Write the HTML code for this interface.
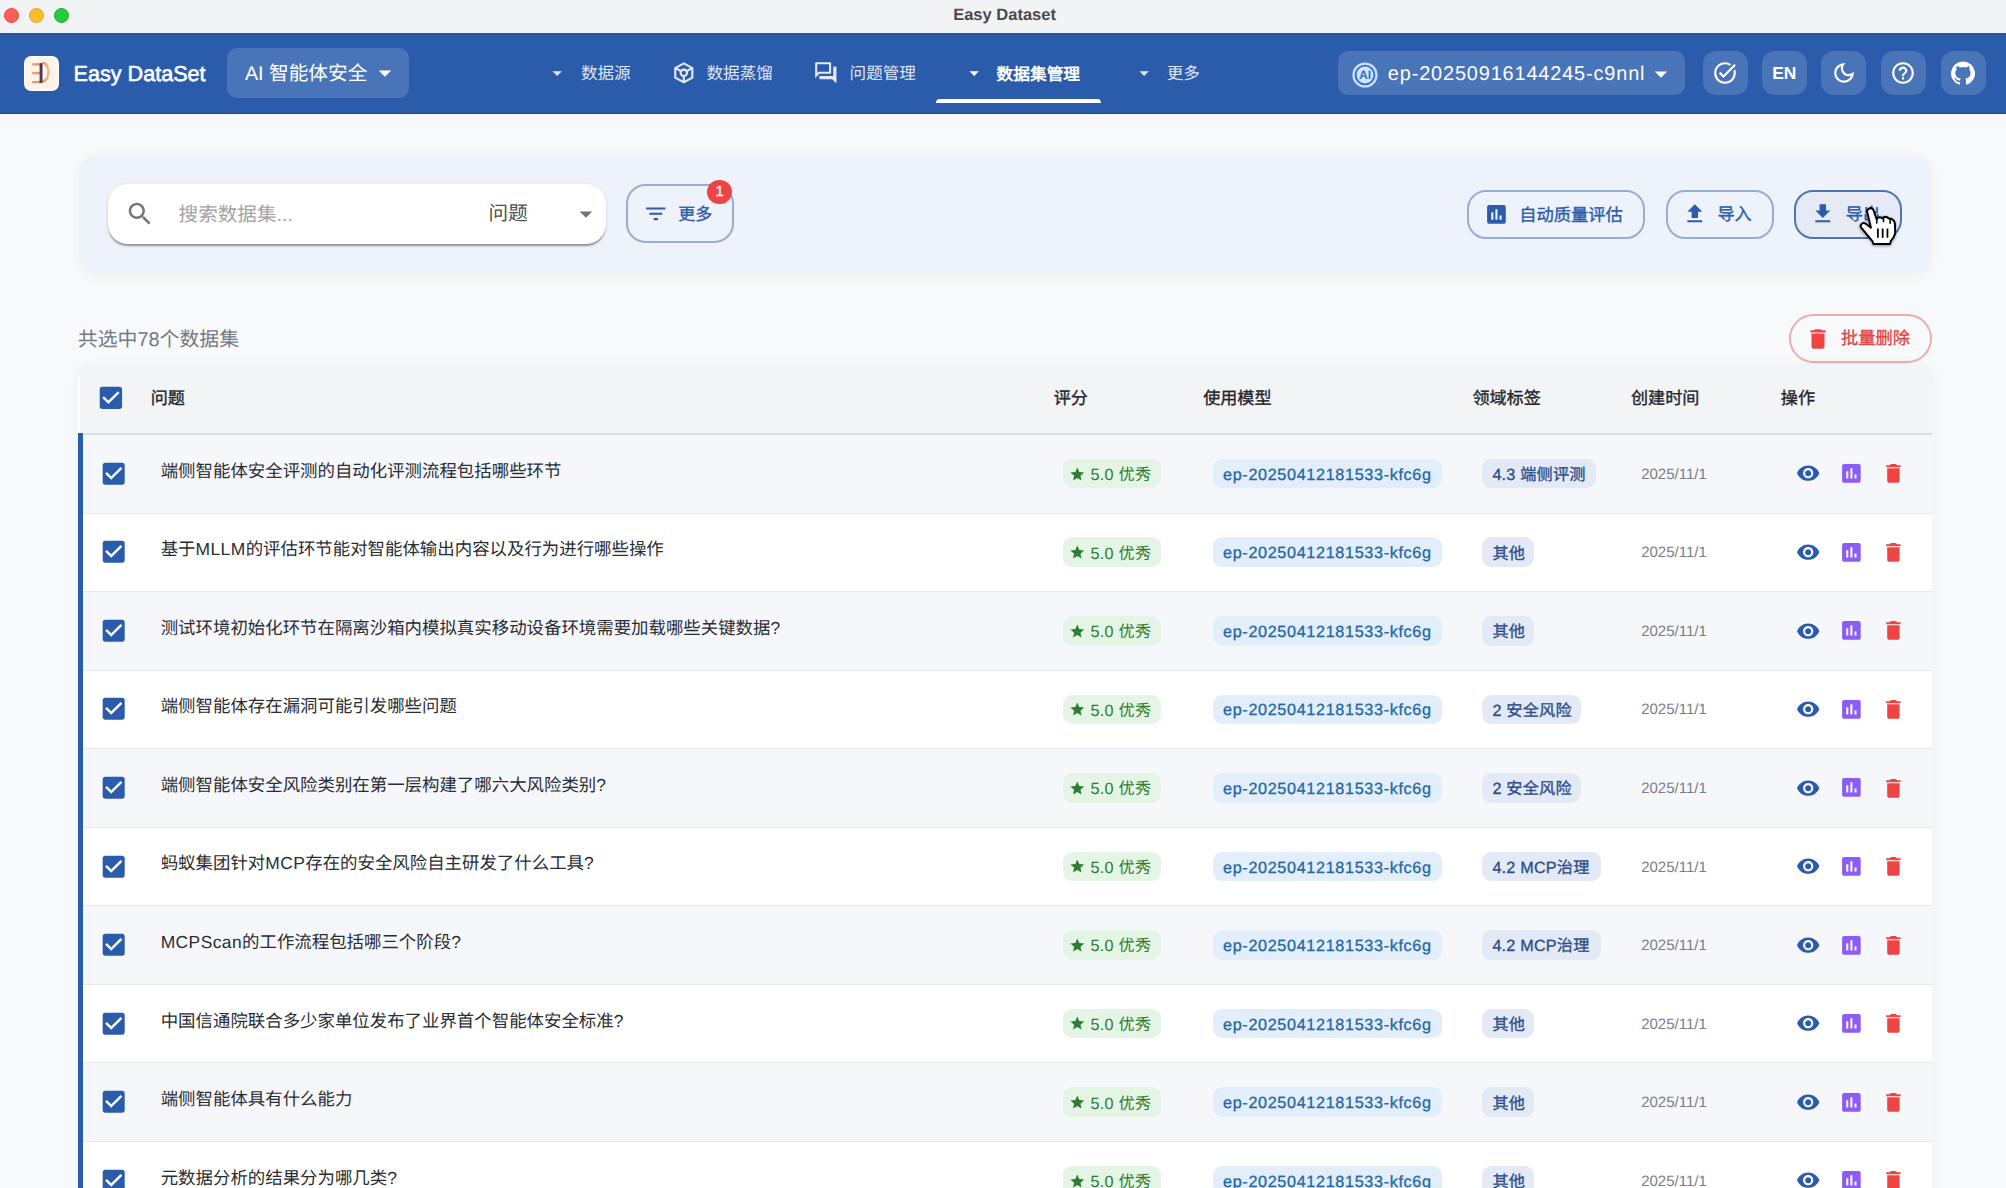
<!DOCTYPE html>
<html lang="zh-CN">
<head>
<meta charset="utf-8">
<title>Easy Dataset</title>
<style>
html,body{margin:0;padding:0;}
body{text-rendering:geometricPrecision;width:2006px;height:1188px;overflow:hidden;position:relative;background:#F8F9FB;font-family:"Liberation Sans",sans-serif;}
.abs{position:absolute;box-sizing:border-box;}
.t{position:absolute;white-space:nowrap;}
.ic{position:absolute;display:block;}
.pill{position:absolute;box-sizing:border-box;border-radius:19px;}
.chip{position:absolute;box-sizing:border-box;height:29.6px;border-radius:9px;}
</style>
</head>
<body>

<div class="abs" style="left:0;top:0;width:2006px;height:33px;background:#F2F3F5;"></div>
<div class="abs" style="left:4.1px;top:8.1px;width:15px;height:15px;border-radius:50%;background:#FE5F57;border:0.6px solid #E24B41;"></div>
<div class="abs" style="left:29.1px;top:8.1px;width:15px;height:15px;border-radius:50%;background:#FEBC2E;border:0.6px solid #E1A325;"></div>
<div class="abs" style="left:54.1px;top:8.1px;width:15px;height:15px;border-radius:50%;background:#28C840;border:0.6px solid #1FAE2F;"></div>
<div class="t" style="left:953.2px;top:3.0px;font-size:16.5px;line-height:24.8px;color:#4A4A4C;font-weight:700;">Easy Dataset</div>
<div class="abs" style="left:0;top:33px;width:2006px;height:80.5px;background:#2B5CAC;border-bottom:1px solid #214887;"></div>
<div class="abs" style="left:0;top:33px;width:2006px;height:1.5px;background:#28529B;"></div>
<svg class="ic" viewBox="0 0 35 35" style="left:24.1px;top:55.8px;width:35px;height:35px;">
<defs><linearGradient id="lg1" x1="0" y1="0" x2="1" y2="0"><stop offset="0" stop-color="#EBA685"/><stop offset="1" stop-color="#E08C66"/></linearGradient>
<linearGradient id="lg2" x1="0" y1="0" x2="1" y2="0"><stop offset="0" stop-color="#E5926D"/><stop offset="1" stop-color="#F3BB8B"/></linearGradient></defs>
<rect x="0" y="0" width="35" height="35" rx="7.2" fill="#FFFDFB"/>
<rect x="1.3" y="1.3" width="32.4" height="32.4" rx="6" fill="#FFF3EA"/>
<rect x="8" y="7.25" width="8" height="2.3" fill="url(#lg1)"/>
<rect x="8" y="16.05" width="8" height="2.3" fill="url(#lg1)"/>
<rect x="8" y="24.95" width="8" height="2.3" fill="url(#lg1)"/>
<path d="M18.4 6.7 A6.2 9.35 0 0 1 18.4 25.4" fill="none" stroke="url(#lg2)" stroke-width="2.6"/>
<rect x="15.6" y="7.1" width="2.9" height="20" fill="#4A3D4B"/>
</svg>
<div class="t" style="left:73.6px;top:57.9px;font-size:21.6px;line-height:32.4px;color:#FFFFFF;font-weight:400;letter-spacing:0px;-webkit-text-stroke:0.55px #FFFFFF;">Easy DataSet</div>
<div class="abs" style="left:226.7px;top:48px;width:182px;height:49.8px;border-radius:10px;background:rgba(255,255,255,0.15);"></div>
<div class="t" style="left:244.9px;top:60.45px;font-size:19.7px;line-height:29.5px;color:#FFFFFF;font-weight:400;">AI 智能体安全</div>
<svg class="ic" viewBox="0 0 24 24" style="left:370.3px;top:57.8px;width:29.9px;height:29.9px;fill:#FFFFFF;"><path d="m7 10 5 5 5-5z"/></svg>
<svg class="ic" viewBox="0 0 24 24" style="left:546.2px;top:62.2px;width:22.4px;height:22.4px;fill:rgba(255,255,255,0.86);"><path d="m7 10 5 5 5-5z"/></svg>
<div class="t" style="left:580.9px;top:62.05px;font-size:16.6px;line-height:24.9px;color:rgba(255,255,255,0.86);font-weight:500;">数据源</div>
<svg class="ic" viewBox="0 0 24 24" style="left:670.7px;top:60.4px;width:25.6px;height:25.6px;fill:rgba(255,255,255,0.86);"><path d="m21 7-9-5-8.99 5v10L12 22l9-5zm-9-2.71 5.91 3.28-3.01 1.67C14.17 8.48 13.14 8 12 8s-2.17.48-2.9 1.24L6.09 7.57zM11 19.16l-6-3.33V9.26l3.13 1.74c-.09.31-.13.65-.13 1 0 1.86 1.27 3.43 3 3.87zM10 12c0-1.1.9-2 2-2s2 .9 2 2-.9 2-2 2-2-.9-2-2m9 3.83-6 3.33v-3.29c1.73-.44 3-2.01 3-3.87 0-.35-.04-.69-.13-1L19 9.26z"/></svg>
<div class="t" style="left:706.5px;top:62.05px;font-size:16.6px;line-height:24.9px;color:rgba(255,255,255,0.86);font-weight:500;">数据蒸馏</div>
<svg class="ic" viewBox="0 0 24 24" style="left:813.2px;top:60.4px;width:25.6px;height:25.6px;fill:rgba(255,255,255,0.86);"><path d="M15 4v7H5.17l-.59.59-.58.58V4zm1-2H3c-.55 0-1 .45-1 1v14l4-4h10c.55 0 1-.45 1-1V3c0-.55-.45-1-1-1m5 4h-2v9H6v2c0 .55.45 1 1 1h11l4 4V7c0-.55-.45-1-1-1"/></svg>
<div class="t" style="left:849.6px;top:62.05px;font-size:16.6px;line-height:24.9px;color:rgba(255,255,255,0.86);font-weight:500;">问题管理</div>
<svg class="ic" viewBox="0 0 24 24" style="left:962.8px;top:62.2px;width:22.4px;height:22.4px;fill:#FFFFFF;"><path d="m7 10 5 5 5-5z"/></svg>
<div class="t" style="left:996.6px;top:61.8px;font-size:16.7px;line-height:25.0px;color:#FFFFFF;font-weight:700;">数据集管理</div>
<div class="abs" style="left:936.2px;top:99.2px;width:165px;height:3.8px;border-radius:3.8px 3.8px 0 0;background:#FFFFFF;"></div>
<svg class="ic" viewBox="0 0 24 24" style="left:1132.5px;top:62.2px;width:22.4px;height:22.4px;fill:rgba(255,255,255,0.86);"><path d="m7 10 5 5 5-5z"/></svg>
<div class="t" style="left:1166.7px;top:62.05px;font-size:16.6px;line-height:24.9px;color:rgba(255,255,255,0.86);font-weight:500;">更多</div>
<div class="abs" style="left:1338px;top:51px;width:347.3px;height:44.4px;border-radius:10px;background:rgba(255,255,255,0.15);"></div>
<svg class="ic" viewBox="0 0 26 26" style="left:1352.3px;top:61.7px;width:26px;height:26px;">
<circle cx="13" cy="13" r="12.6" fill="#CBE0FD"/>
<circle cx="13" cy="13" r="9.4" fill="#D6E4FA" stroke="#2C6FD1" stroke-width="1.9"/>
<text x="13" y="17.4" text-anchor="middle" font-family="Liberation Sans, sans-serif" font-weight="700" font-size="12.2" fill="#2C6FD1">AI</text>
</svg>
<div class="t" style="left:1387.8px;top:60.0px;font-size:19.9px;line-height:29.8px;color:#FFFFFF;font-weight:400;letter-spacing:0.86px;">ep-20250916144245-c9nnl</div>
<svg class="ic" viewBox="0 0 24 24" style="left:1646px;top:58.6px;width:29.9px;height:29.9px;fill:#FFFFFF;"><path d="m7 10 5 5 5-5z"/></svg>
<div class="abs" style="left:1703px;top:50.7px;width:44.8px;height:44.8px;border-radius:13px;background:rgba(255,255,255,0.15);"></div>
<div class="abs" style="left:1762.3px;top:50.7px;width:44.8px;height:44.8px;border-radius:13px;background:rgba(255,255,255,0.15);"></div>
<div class="abs" style="left:1821.2px;top:50.7px;width:44.8px;height:44.8px;border-radius:13px;background:rgba(255,255,255,0.15);"></div>
<div class="abs" style="left:1881px;top:50.7px;width:44.8px;height:44.8px;border-radius:13px;background:rgba(255,255,255,0.15);"></div>
<div class="abs" style="left:1941px;top:50.7px;width:44.8px;height:44.8px;border-radius:13px;background:rgba(255,255,255,0.15);"></div>
<svg class="ic" viewBox="0 0 24 24" style="left:1712.4px;top:60.099999999999994px;width:26px;height:26px;fill:#FFFFFF;"><path d="M22 5.18 10.59 16.6l-4.24-4.24 1.41-1.41 2.83 2.83 10-10zm-2.21 5.04c.13.57.21 1.17.21 1.78 0 4.42-3.58 8-8 8s-8-3.58-8-8 3.58-8 8-8c1.58 0 3.04.46 4.28 1.25l1.44-1.44C16.1 2.67 14.13 2 12 2 6.48 2 2 6.48 2 12s4.48 10 10 10 10-4.48 10-10c0-1.19-.22-2.33-.6-3.39z"/></svg>
<div class="t" style="left:1772.2px;top:60.25px;font-size:17.4px;line-height:26.1px;color:#FFFFFF;font-weight:700;">EN</div>
<svg class="ic" viewBox="0 0 24 24" style="left:1830.6000000000001px;top:60.099999999999994px;width:26px;height:26px;fill:#FFFFFF;"><path d="M9.37 5.51c-.18.64-.27 1.31-.27 1.99 0 4.08 3.32 7.4 7.4 7.4.68 0 1.35-.09 1.99-.27C17.45 17.19 14.93 19 12 19c-3.86 0-7-3.14-7-7 0-2.93 1.81-5.45 4.37-6.49M12 3c-4.97 0-9 4.03-9 9s4.03 9 9 9 9-4.03 9-9c0-.46-.04-.92-.1-1.36-.98 1.37-2.58 2.26-4.4 2.26-2.98 0-5.4-2.42-5.4-5.4 0-1.81.89-3.42 2.26-4.4-.44-.06-.9-.1-1.36-.1"/></svg>
<svg class="ic" viewBox="0 0 24 24" style="left:1890.4px;top:60.099999999999994px;width:26px;height:26px;fill:#FFFFFF;"><path d="M11 18h2v-2h-2zm1-16C6.48 2 2 6.48 2 12s4.48 10 10 10 10-4.48 10-10S17.52 2 12 2m0 18c-4.41 0-8-3.59-8-8s3.59-8 8-8 8 3.59 8 8-3.59 8-8 8m0-14c-2.21 0-4 1.79-4 4h2c0-1.1.9-2 2-2s2 .9 2 2c0 2-3 1.75-3 5h2c0-2.25 3-2.5 3-5 0-2.21-1.79-4-4-4"/></svg>
<svg class="ic" viewBox="0 0 24 24" style="left:1950.4px;top:60.099999999999994px;width:26px;height:26px;fill:#FFFFFF;"><path d="M12 1.27a11 11 0 00-3.48 21.46c.55.09.73-.28.73-.55v-1.84c-3.03.64-3.67-1.46-3.67-1.46-.55-1.29-1.28-1.65-1.28-1.65-.92-.65.1-.65.1-.65 1.1 0 1.73 1.1 1.73 1.1.92 1.65 2.57 1.2 3.21.92a2 2 0 01.64-1.47c-2.47-.27-5.04-1.19-5.04-5.5 0-1.1.46-2.1 1.2-2.84a3.76 3.76 0 010-2.93s.91-.28 3.11 1.1c1.8-.49 3.7-.49 5.5 0 2.1-1.38 3.02-1.1 3.02-1.1a3.76 3.76 0 010 2.93c.83.74 1.2 1.74 1.2 2.94 0 4.21-2.57 5.13-5.04 5.4.45.37.82.92.82 2.02v3.03c0 .27.1.64.73.55A11 11 0 0012 1.27"/></svg>
<div class="abs" style="left:79px;top:154px;width:1853px;height:119.6px;border-radius:20px;background:#EEF2FA;box-shadow:0 3px 14px rgba(0,0,0,0.035);"></div>
<div class="abs" style="left:108px;top:184px;width:498px;height:60px;border-radius:20px;background:#FFFFFF;box-shadow:0 2.5px 1.2px -1.2px rgba(0,0,0,0.2),0 1.2px 1.2px 0 rgba(0,0,0,0.14),0 1.2px 3.7px 0 rgba(0,0,0,0.12);"></div>
<svg class="ic" viewBox="0 0 24 24" style="left:125.1px;top:199.1px;width:29.9px;height:29.9px;fill:#757575;"><path d="M15.5 14h-.79l-.28-.27C15.41 12.59 16 11.11 16 9.5 16 5.91 13.09 3 9.5 3S3 5.91 3 9.5 5.91 16 9.5 16c1.61 0 3.09-.59 4.23-1.57l.27.28v.79l5 4.99L20.49 19zm-6 0C7.01 14 5 11.99 5 9.5S7.01 5 9.5 5 14 7.01 14 9.5 11.99 14 9.5 14"/></svg>
<div class="t" style="left:178.6px;top:201.4px;font-size:19.6px;line-height:29.4px;color:#A3A3A3;font-weight:400;">搜索数据集...</div>
<div class="t" style="left:488.6px;top:200.1px;font-size:19.6px;line-height:29.4px;color:#4F4F4F;font-weight:400;">问题</div>
<svg class="ic" viewBox="0 0 24 24" style="left:571.4px;top:199.4px;width:29.9px;height:29.9px;fill:#757575;"><path d="m7 10 5 5 5-5z"/></svg>
<div class="abs" style="left:626px;top:184.2px;width:108.4px;height:59.2px;border-radius:19.5px;border:2px solid #98ADD2;"></div>
<svg class="ic" viewBox="0 0 24 24" style="left:642.6px;top:201.1px;width:25.6px;height:25.6px;fill:#2B5CAC;"><path d="M10 18h4v-2h-4zM3 6v2h18V6zm3 7h12v-2H6z"/></svg>
<div class="t" style="left:678.3px;top:202.25px;font-size:17px;line-height:25.5px;color:#2B5CAC;font-weight:500;-webkit-text-stroke:0.35px #2B5CAC;">更多</div>
<div class="abs" style="left:707.4px;top:179.6px;width:24.6px;height:24.6px;border-radius:50%;background:#EF4444;"></div>
<div class="t" style="left:715.6px;top:180.9px;font-size:14.8px;line-height:22.2px;color:#FFFFFF;font-weight:400;-webkit-text-stroke:0.3px #FFFFFF;">1</div>
<div class="pill" style="left:1467.3px;top:189.6px;width:178.2px;height:49px;border:2px solid #98ADD2;"></div>
<svg class="ic" viewBox="0 0 24 24" style="left:1484.1px;top:201.6px;width:24.9px;height:24.9px;fill:#2B5CAC;"><path d="M19 3H5c-1.1 0-2 .9-2 2v14c0 1.1.9 2 2 2h14c1.1 0 2-.9 2-2V5c0-1.1-.9-2-2-2M9 17H7v-7h2zm4 0h-2V7h2zm4 0h-2v-4h2z"/></svg>
<div class="t" style="left:1519.2px;top:201.9px;font-size:17.3px;line-height:26.0px;color:#2B5CAC;font-weight:500;-webkit-text-stroke:0.35px #2B5CAC;">自动质量评估</div>
<div class="pill" style="left:1665.8px;top:189.6px;width:108px;height:49px;border:2px solid #98ADD2;"></div>
<svg class="ic" viewBox="0 0 24 24" style="left:1682.1px;top:200.6px;width:25.6px;height:25.6px;fill:#2B5CAC;"><path d="M5 20h14v-2H5zm0-10h4v6h6v-6h4l-7-7z"/></svg>
<div class="t" style="left:1717.4px;top:202.05px;font-size:17.1px;line-height:25.7px;color:#2B5CAC;font-weight:500;-webkit-text-stroke:0.35px #2B5CAC;">导入</div>
<div class="pill" style="left:1794px;top:189.6px;width:108px;height:49px;border:2px solid #4F74B2;background:#E6EAF5;"></div>
<svg class="ic" viewBox="0 0 24 24" style="left:1810.4px;top:200.9px;width:25.6px;height:25.6px;fill:#2B5CAC;"><path d="M5 20h14v-2H5zM19 9h-4V3H9v6H5l7 7z"/></svg>
<div class="t" style="left:1845.8px;top:202.05px;font-size:17.1px;line-height:25.7px;color:#2B5CAC;font-weight:500;-webkit-text-stroke:0.35px #2B5CAC;">导出</div>
<div class="t" style="left:77.8px;top:325.6px;font-size:19.9px;line-height:29.8px;color:#737A86;font-weight:400;">共选中78个数据集</div>
<div class="pill" style="left:1789px;top:313.6px;width:143.2px;height:49.3px;border:2px solid #F0ABAB;border-radius:24.6px;"></div>
<svg class="ic" viewBox="0 0 24 24" style="left:1805.2px;top:325.6px;width:26px;height:26px;fill:#EF4444;"><path d="M6 19c0 1.1.9 2 2 2h8c1.1 0 2-.9 2-2V7H6zM19 4h-3.500l-1-1h-5l-1 1H5v2h14z"/></svg>
<div class="t" style="left:1841px;top:325.2px;font-size:17.3px;line-height:26.0px;color:#E04848;font-weight:500;-webkit-text-stroke:0.35px #E04848;">批量删除</div>
<div class="abs" style="left:78px;top:363px;width:1854px;height:860px;border-radius:11px 11px 0 0;background:#FFFFFF;box-shadow:0 3px 14px rgba(0,0,0,0.04);overflow:hidden;">
<div class="abs" style="left:0;top:0;width:1854px;height:70px;background:#F3F4F6;"></div>
<div class="abs" style="left:0;top:8px;width:2.3px;height:62px;background:linear-gradient(#F3F4F6,#FFFFFF 12px);"></div>
<div class="abs" style="left:0;top:69.7px;width:1854px;height:2.3px;background:#DBDDE2;"></div>
<div class="abs" style="left:0;top:72.0px;width:1854px;height:78.55px;background:#F6F7FB;border-bottom:1.3px solid #E6E8EC;"></div>
<div class="abs" style="left:0;top:150.55px;width:1854px;height:78.55px;background:#FFFFFF;border-bottom:1.3px solid #E6E8EC;"></div>
<div class="abs" style="left:0;top:229.1px;width:1854px;height:78.55px;background:#F6F7FB;border-bottom:1.3px solid #E6E8EC;"></div>
<div class="abs" style="left:0;top:307.65px;width:1854px;height:78.55px;background:#FFFFFF;border-bottom:1.3px solid #E6E8EC;"></div>
<div class="abs" style="left:0;top:386.2px;width:1854px;height:78.55px;background:#F6F7FB;border-bottom:1.3px solid #E6E8EC;"></div>
<div class="abs" style="left:0;top:464.75px;width:1854px;height:78.55px;background:#FFFFFF;border-bottom:1.3px solid #E6E8EC;"></div>
<div class="abs" style="left:0;top:543.3px;width:1854px;height:78.55px;background:#F6F7FB;border-bottom:1.3px solid #E6E8EC;"></div>
<div class="abs" style="left:0;top:621.85px;width:1854px;height:78.55px;background:#FFFFFF;border-bottom:1.3px solid #E6E8EC;"></div>
<div class="abs" style="left:0;top:700.4px;width:1854px;height:78.55px;background:#F6F7FB;border-bottom:1.3px solid #E6E8EC;"></div>
<div class="abs" style="left:0;top:778.9499999999999px;width:1854px;height:78.55px;background:#FFFFFF;border-bottom:1.3px solid #E6E8EC;"></div>
</div>
<div class="abs" style="left:78px;top:432.8px;width:5px;height:800px;background:#2B5CAC;"></div>
<svg class="ic" viewBox="0 0 24 24" style="left:96.39999999999999px;top:382.8px;width:29.8px;height:29.8px;fill:#2B5CAC;"><path d="M19 3H5c-1.110 0-2 .9-2 2v14c0 1.100.890 2 2 2h14c1.110 0 2-.9 2-2V5c0-1.100-.890-2-2-2m-9 14-5-5 1.410-1.410L10 14.170l7.590-7.590L19 8z"/></svg>
<div class="t" style="left:150.7px;top:386.15px;font-size:17.1px;line-height:25.7px;color:#23262B;font-weight:500;-webkit-text-stroke:0.35px #23262B;">问题</div>
<div class="t" style="left:1053.7px;top:386.15px;font-size:17.1px;line-height:25.7px;color:#23262B;font-weight:500;-webkit-text-stroke:0.35px #23262B;">评分</div>
<div class="t" style="left:1203.2px;top:386.15px;font-size:17.1px;line-height:25.7px;color:#23262B;font-weight:500;-webkit-text-stroke:0.35px #23262B;">使用模型</div>
<div class="t" style="left:1472.4px;top:386.15px;font-size:17.1px;line-height:25.7px;color:#23262B;font-weight:500;-webkit-text-stroke:0.35px #23262B;">领域标签</div>
<div class="t" style="left:1631px;top:386.15px;font-size:17.1px;line-height:25.7px;color:#23262B;font-weight:500;-webkit-text-stroke:0.35px #23262B;">创建时间</div>
<div class="t" style="left:1780.8px;top:386.15px;font-size:17.1px;line-height:25.7px;color:#23262B;font-weight:500;-webkit-text-stroke:0.35px #23262B;">操作</div>
<svg class="ic" viewBox="0 0 24 24" style="left:99.3px;top:458.75px;width:29.4px;height:29.4px;fill:#2B5CAC;"><path d="M19 3H5c-1.110 0-2 .9-2 2v14c0 1.100.890 2 2 2h14c1.110 0 2-.9 2-2V5c0-1.100-.890-2-2-2m-9 14-5-5 1.410-1.410L10 14.170l7.590-7.590L19 8z"/></svg>
<div class="t" style="left:160.7px;top:457.7px;font-size:17.43px;line-height:26.1px;color:#2A2D33;font-weight:500;">端侧智能体安全评测的自动化评测流程包括哪些环节</div>
<div class="chip" style="left:1063.2px;top:458.84999999999997px;width:98px;background:#E4F4E5;"></div>
<svg class="ic" viewBox="0 0 24 24" style="left:1068.6px;top:465.55px;width:16.6px;height:16.6px;fill:#2E7D32;"><path d="M12 17.270 18.180 21l-1.640-7.030L22 9.240l-7.190-.61L12 2 9.190 8.630 2 9.240l5.460 4.730L5.820 21z"/></svg>
<div class="t" style="left:1090.6px;top:463.1px;font-size:16.2px;line-height:24.3px;color:#2E7D32;font-weight:500;letter-spacing:0.25px;">5.0 优秀</div>
<div class="chip" style="left:1212.8px;top:458.84999999999997px;width:228.8px;background:#E2EEF9;"></div>
<div class="t" style="left:1223px;top:462.8px;font-size:16.2px;line-height:24.3px;color:#2468A4;font-weight:400;letter-spacing:0.66px;-webkit-text-stroke:0.3px #2468A4;">ep-20250412181533-kfc6g</div>
<div class="chip" style="left:1481.9px;top:458.84999999999997px;width:113.9px;background:#E4EAF5;"></div>
<div class="t" style="left:1492.4px;top:463.1px;font-size:16.2px;line-height:24.3px;color:#2F4F8C;font-weight:500;letter-spacing:0.2px;-webkit-text-stroke:0.35px #2F4F8C;">4.3 端侧评测</div>
<div class="t" style="left:1641.2px;top:463.8px;font-size:15px;line-height:22.5px;color:#7A7D84;font-weight:400;">2025/11/1</div>
<svg class="ic" viewBox="0 0 24 24" style="left:1796.2px;top:461.45px;width:24.4px;height:24.4px;fill:#2B5CAC;"><path d="M12 4.5C7 4.500 2.730 7.610 1 12c1.730 4.390 6 7.500 11 7.500s9.270-3.110 11-7.500c-1.730-4.390-6-7.500-11-7.500M12 17c-2.760 0-5-2.240-5-5s2.240-5 5-5 5 2.240 5 5-2.240 5-5 5m0-8c-1.660 0-3 1.340-3 3s1.340 3 3 3 3-1.340 3-3-1.340-3-3-3"/></svg>
<svg class="ic" viewBox="0 0 24 24" style="left:1838.6px;top:461.25px;width:24.8px;height:24.8px;fill:#8B5CF6;"><path d="M19 3H5c-1.1 0-2 .9-2 2v14c0 1.1.9 2 2 2h14c1.1 0 2-.9 2-2V5c0-1.1-.9-2-2-2M9 17H7v-7h2zm4 0h-2V7h2zm4 0h-2v-4h2z"/></svg>
<svg class="ic" viewBox="0 0 24 24" style="left:1880.8999999999999px;top:461.35px;width:24.8px;height:24.8px;fill:#EF4444;"><path d="M6 19c0 1.1.9 2 2 2h8c1.1 0 2-.9 2-2V7H6zM19 4h-3.500l-1-1h-5l-1 1H5v2h14z"/></svg>
<svg class="ic" viewBox="0 0 24 24" style="left:99.3px;top:537.3px;width:29.4px;height:29.4px;fill:#2B5CAC;"><path d="M19 3H5c-1.110 0-2 .9-2 2v14c0 1.100.890 2 2 2h14c1.110 0 2-.9 2-2V5c0-1.100-.890-2-2-2m-9 14-5-5 1.410-1.410L10 14.170l7.590-7.590L19 8z"/></svg>
<div class="t" style="left:160.7px;top:536.25px;font-size:17.43px;line-height:26.1px;color:#2A2D33;font-weight:500;">基于<span style="letter-spacing:0.42px">MLLM</span>的评估环节能对智能体输出内容以及行为进行哪些操作</div>
<div class="chip" style="left:1063.2px;top:537.4px;width:98px;background:#E4F4E5;"></div>
<svg class="ic" viewBox="0 0 24 24" style="left:1068.6px;top:544.1px;width:16.6px;height:16.6px;fill:#2E7D32;"><path d="M12 17.270 18.180 21l-1.640-7.030L22 9.240l-7.190-.61L12 2 9.190 8.630 2 9.240l5.460 4.730L5.820 21z"/></svg>
<div class="t" style="left:1090.6px;top:541.65px;font-size:16.2px;line-height:24.3px;color:#2E7D32;font-weight:500;letter-spacing:0.25px;">5.0 优秀</div>
<div class="chip" style="left:1212.8px;top:537.4px;width:228.8px;background:#E2EEF9;"></div>
<div class="t" style="left:1223px;top:541.35px;font-size:16.2px;line-height:24.3px;color:#2468A4;font-weight:400;letter-spacing:0.66px;-webkit-text-stroke:0.3px #2468A4;">ep-20250412181533-kfc6g</div>
<div class="chip" style="left:1481.9px;top:537.4px;width:51.8px;background:#E4EAF5;"></div>
<div class="t" style="left:1492.4px;top:541.65px;font-size:16.2px;line-height:24.3px;color:#2F4F8C;font-weight:500;letter-spacing:0.2px;-webkit-text-stroke:0.35px #2F4F8C;">其他</div>
<div class="t" style="left:1641.2px;top:542.35px;font-size:15px;line-height:22.5px;color:#7A7D84;font-weight:400;">2025/11/1</div>
<svg class="ic" viewBox="0 0 24 24" style="left:1796.2px;top:540.0px;width:24.4px;height:24.4px;fill:#2B5CAC;"><path d="M12 4.5C7 4.500 2.730 7.610 1 12c1.730 4.390 6 7.500 11 7.500s9.270-3.110 11-7.500c-1.730-4.390-6-7.500-11-7.500M12 17c-2.760 0-5-2.240-5-5s2.240-5 5-5 5 2.240 5 5-2.240 5-5 5m0-8c-1.660 0-3 1.340-3 3s1.340 3 3 3 3-1.340 3-3-1.340-3-3-3"/></svg>
<svg class="ic" viewBox="0 0 24 24" style="left:1838.6px;top:539.8000000000001px;width:24.8px;height:24.8px;fill:#8B5CF6;"><path d="M19 3H5c-1.1 0-2 .9-2 2v14c0 1.1.9 2 2 2h14c1.1 0 2-.9 2-2V5c0-1.1-.9-2-2-2M9 17H7v-7h2zm4 0h-2V7h2zm4 0h-2v-4h2z"/></svg>
<svg class="ic" viewBox="0 0 24 24" style="left:1880.8999999999999px;top:539.9px;width:24.8px;height:24.8px;fill:#EF4444;"><path d="M6 19c0 1.1.9 2 2 2h8c1.1 0 2-.9 2-2V7H6zM19 4h-3.500l-1-1h-5l-1 1H5v2h14z"/></svg>
<svg class="ic" viewBox="0 0 24 24" style="left:99.3px;top:615.8499999999999px;width:29.4px;height:29.4px;fill:#2B5CAC;"><path d="M19 3H5c-1.110 0-2 .9-2 2v14c0 1.100.890 2 2 2h14c1.110 0 2-.9 2-2V5c0-1.100-.890-2-2-2m-9 14-5-5 1.410-1.410L10 14.170l7.590-7.590L19 8z"/></svg>
<div class="t" style="left:160.7px;top:614.8px;font-size:17.43px;line-height:26.1px;color:#2A2D33;font-weight:500;">测试环境初始化环节在隔离沙箱内模拟真实移动设备环境需要加载哪些关键数据?</div>
<div class="chip" style="left:1063.2px;top:615.9499999999999px;width:98px;background:#E4F4E5;"></div>
<svg class="ic" viewBox="0 0 24 24" style="left:1068.6px;top:622.65px;width:16.6px;height:16.6px;fill:#2E7D32;"><path d="M12 17.270 18.180 21l-1.640-7.030L22 9.240l-7.190-.61L12 2 9.190 8.630 2 9.240l5.460 4.730L5.820 21z"/></svg>
<div class="t" style="left:1090.6px;top:620.2px;font-size:16.2px;line-height:24.3px;color:#2E7D32;font-weight:500;letter-spacing:0.25px;">5.0 优秀</div>
<div class="chip" style="left:1212.8px;top:615.9499999999999px;width:228.8px;background:#E2EEF9;"></div>
<div class="t" style="left:1223px;top:619.9px;font-size:16.2px;line-height:24.3px;color:#2468A4;font-weight:400;letter-spacing:0.66px;-webkit-text-stroke:0.3px #2468A4;">ep-20250412181533-kfc6g</div>
<div class="chip" style="left:1481.9px;top:615.9499999999999px;width:51.8px;background:#E4EAF5;"></div>
<div class="t" style="left:1492.4px;top:620.2px;font-size:16.2px;line-height:24.3px;color:#2F4F8C;font-weight:500;letter-spacing:0.2px;-webkit-text-stroke:0.35px #2F4F8C;">其他</div>
<div class="t" style="left:1641.2px;top:620.9px;font-size:15px;line-height:22.5px;color:#7A7D84;font-weight:400;">2025/11/1</div>
<svg class="ic" viewBox="0 0 24 24" style="left:1796.2px;top:618.55px;width:24.4px;height:24.4px;fill:#2B5CAC;"><path d="M12 4.5C7 4.500 2.730 7.610 1 12c1.730 4.390 6 7.500 11 7.500s9.270-3.110 11-7.500c-1.730-4.390-6-7.500-11-7.500M12 17c-2.760 0-5-2.240-5-5s2.240-5 5-5 5 2.240 5 5-2.240 5-5 5m0-8c-1.660 0-3 1.340-3 3s1.340 3 3 3 3-1.340 3-3-1.340-3-3-3"/></svg>
<svg class="ic" viewBox="0 0 24 24" style="left:1838.6px;top:618.35px;width:24.8px;height:24.8px;fill:#8B5CF6;"><path d="M19 3H5c-1.1 0-2 .9-2 2v14c0 1.1.9 2 2 2h14c1.1 0 2-.9 2-2V5c0-1.1-.9-2-2-2M9 17H7v-7h2zm4 0h-2V7h2zm4 0h-2v-4h2z"/></svg>
<svg class="ic" viewBox="0 0 24 24" style="left:1880.8999999999999px;top:618.4499999999999px;width:24.8px;height:24.8px;fill:#EF4444;"><path d="M6 19c0 1.1.9 2 2 2h8c1.1 0 2-.9 2-2V7H6zM19 4h-3.500l-1-1h-5l-1 1H5v2h14z"/></svg>
<svg class="ic" viewBox="0 0 24 24" style="left:99.3px;top:694.3999999999999px;width:29.4px;height:29.4px;fill:#2B5CAC;"><path d="M19 3H5c-1.110 0-2 .9-2 2v14c0 1.100.890 2 2 2h14c1.110 0 2-.9 2-2V5c0-1.100-.890-2-2-2m-9 14-5-5 1.410-1.410L10 14.170l7.590-7.590L19 8z"/></svg>
<div class="t" style="left:160.7px;top:693.35px;font-size:17.43px;line-height:26.1px;color:#2A2D33;font-weight:500;">端侧智能体存在漏洞可能引发哪些问题</div>
<div class="chip" style="left:1063.2px;top:694.4999999999999px;width:98px;background:#E4F4E5;"></div>
<svg class="ic" viewBox="0 0 24 24" style="left:1068.6px;top:701.1999999999999px;width:16.6px;height:16.6px;fill:#2E7D32;"><path d="M12 17.270 18.180 21l-1.640-7.030L22 9.240l-7.190-.61L12 2 9.190 8.630 2 9.240l5.460 4.730L5.820 21z"/></svg>
<div class="t" style="left:1090.6px;top:698.75px;font-size:16.2px;line-height:24.3px;color:#2E7D32;font-weight:500;letter-spacing:0.25px;">5.0 优秀</div>
<div class="chip" style="left:1212.8px;top:694.4999999999999px;width:228.8px;background:#E2EEF9;"></div>
<div class="t" style="left:1223px;top:698.45px;font-size:16.2px;line-height:24.3px;color:#2468A4;font-weight:400;letter-spacing:0.66px;-webkit-text-stroke:0.3px #2468A4;">ep-20250412181533-kfc6g</div>
<div class="chip" style="left:1481.9px;top:694.4999999999999px;width:99px;background:#E4EAF5;"></div>
<div class="t" style="left:1492.4px;top:698.75px;font-size:16.2px;line-height:24.3px;color:#2F4F8C;font-weight:500;letter-spacing:0.2px;-webkit-text-stroke:0.35px #2F4F8C;">2 安全风险</div>
<div class="t" style="left:1641.2px;top:699.45px;font-size:15px;line-height:22.5px;color:#7A7D84;font-weight:400;">2025/11/1</div>
<svg class="ic" viewBox="0 0 24 24" style="left:1796.2px;top:697.0999999999999px;width:24.4px;height:24.4px;fill:#2B5CAC;"><path d="M12 4.5C7 4.500 2.730 7.610 1 12c1.730 4.390 6 7.500 11 7.500s9.270-3.110 11-7.500c-1.730-4.390-6-7.500-11-7.500M12 17c-2.760 0-5-2.240-5-5s2.240-5 5-5 5 2.240 5 5-2.240 5-5 5m0-8c-1.660 0-3 1.340-3 3s1.340 3 3 3 3-1.340 3-3-1.340-3-3-3"/></svg>
<svg class="ic" viewBox="0 0 24 24" style="left:1838.6px;top:696.9px;width:24.8px;height:24.8px;fill:#8B5CF6;"><path d="M19 3H5c-1.1 0-2 .9-2 2v14c0 1.1.9 2 2 2h14c1.1 0 2-.9 2-2V5c0-1.1-.9-2-2-2M9 17H7v-7h2zm4 0h-2V7h2zm4 0h-2v-4h2z"/></svg>
<svg class="ic" viewBox="0 0 24 24" style="left:1880.8999999999999px;top:696.9999999999999px;width:24.8px;height:24.8px;fill:#EF4444;"><path d="M6 19c0 1.1.9 2 2 2h8c1.1 0 2-.9 2-2V7H6zM19 4h-3.500l-1-1h-5l-1 1H5v2h14z"/></svg>
<svg class="ic" viewBox="0 0 24 24" style="left:99.3px;top:772.9499999999999px;width:29.4px;height:29.4px;fill:#2B5CAC;"><path d="M19 3H5c-1.110 0-2 .9-2 2v14c0 1.100.890 2 2 2h14c1.110 0 2-.9 2-2V5c0-1.100-.890-2-2-2m-9 14-5-5 1.410-1.410L10 14.170l7.590-7.590L19 8z"/></svg>
<div class="t" style="left:160.7px;top:771.9px;font-size:17.43px;line-height:26.1px;color:#2A2D33;font-weight:500;">端侧智能体安全风险类别在第一层构建了哪六大风险类别?</div>
<div class="chip" style="left:1063.2px;top:773.05px;width:98px;background:#E4F4E5;"></div>
<svg class="ic" viewBox="0 0 24 24" style="left:1068.6px;top:779.75px;width:16.6px;height:16.6px;fill:#2E7D32;"><path d="M12 17.270 18.180 21l-1.640-7.030L22 9.240l-7.190-.61L12 2 9.190 8.630 2 9.240l5.460 4.730L5.820 21z"/></svg>
<div class="t" style="left:1090.6px;top:777.3px;font-size:16.2px;line-height:24.3px;color:#2E7D32;font-weight:500;letter-spacing:0.25px;">5.0 优秀</div>
<div class="chip" style="left:1212.8px;top:773.05px;width:228.8px;background:#E2EEF9;"></div>
<div class="t" style="left:1223px;top:777.0px;font-size:16.2px;line-height:24.3px;color:#2468A4;font-weight:400;letter-spacing:0.66px;-webkit-text-stroke:0.3px #2468A4;">ep-20250412181533-kfc6g</div>
<div class="chip" style="left:1481.9px;top:773.05px;width:99px;background:#E4EAF5;"></div>
<div class="t" style="left:1492.4px;top:777.3px;font-size:16.2px;line-height:24.3px;color:#2F4F8C;font-weight:500;letter-spacing:0.2px;-webkit-text-stroke:0.35px #2F4F8C;">2 安全风险</div>
<div class="t" style="left:1641.2px;top:778.0px;font-size:15px;line-height:22.5px;color:#7A7D84;font-weight:400;">2025/11/1</div>
<svg class="ic" viewBox="0 0 24 24" style="left:1796.2px;top:775.65px;width:24.4px;height:24.4px;fill:#2B5CAC;"><path d="M12 4.5C7 4.500 2.730 7.610 1 12c1.730 4.390 6 7.500 11 7.500s9.270-3.110 11-7.500c-1.730-4.390-6-7.500-11-7.500M12 17c-2.760 0-5-2.240-5-5s2.240-5 5-5 5 2.240 5 5-2.240 5-5 5m0-8c-1.660 0-3 1.340-3 3s1.340 3 3 3 3-1.340 3-3-1.340-3-3-3"/></svg>
<svg class="ic" viewBox="0 0 24 24" style="left:1838.6px;top:775.45px;width:24.8px;height:24.8px;fill:#8B5CF6;"><path d="M19 3H5c-1.1 0-2 .9-2 2v14c0 1.1.9 2 2 2h14c1.1 0 2-.9 2-2V5c0-1.1-.9-2-2-2M9 17H7v-7h2zm4 0h-2V7h2zm4 0h-2v-4h2z"/></svg>
<svg class="ic" viewBox="0 0 24 24" style="left:1880.8999999999999px;top:775.55px;width:24.8px;height:24.8px;fill:#EF4444;"><path d="M6 19c0 1.1.9 2 2 2h8c1.1 0 2-.9 2-2V7H6zM19 4h-3.500l-1-1h-5l-1 1H5v2h14z"/></svg>
<svg class="ic" viewBox="0 0 24 24" style="left:99.3px;top:851.5px;width:29.4px;height:29.4px;fill:#2B5CAC;"><path d="M19 3H5c-1.110 0-2 .9-2 2v14c0 1.100.890 2 2 2h14c1.110 0 2-.9 2-2V5c0-1.100-.890-2-2-2m-9 14-5-5 1.410-1.410L10 14.170l7.590-7.590L19 8z"/></svg>
<div class="t" style="left:160.7px;top:850.45px;font-size:17.43px;line-height:26.1px;color:#2A2D33;font-weight:500;">蚂蚁集团针对<span style="letter-spacing:0.42px">MCP</span>存在的安全风险自主研发了什么工具?</div>
<div class="chip" style="left:1063.2px;top:851.6px;width:98px;background:#E4F4E5;"></div>
<svg class="ic" viewBox="0 0 24 24" style="left:1068.6px;top:858.3000000000001px;width:16.6px;height:16.6px;fill:#2E7D32;"><path d="M12 17.270 18.180 21l-1.640-7.030L22 9.240l-7.190-.61L12 2 9.190 8.630 2 9.240l5.460 4.730L5.820 21z"/></svg>
<div class="t" style="left:1090.6px;top:855.85px;font-size:16.2px;line-height:24.3px;color:#2E7D32;font-weight:500;letter-spacing:0.25px;">5.0 优秀</div>
<div class="chip" style="left:1212.8px;top:851.6px;width:228.8px;background:#E2EEF9;"></div>
<div class="t" style="left:1223px;top:855.55px;font-size:16.2px;line-height:24.3px;color:#2468A4;font-weight:400;letter-spacing:0.66px;-webkit-text-stroke:0.3px #2468A4;">ep-20250412181533-kfc6g</div>
<div class="chip" style="left:1481.9px;top:851.6px;width:119px;background:#E4EAF5;"></div>
<div class="t" style="left:1492.4px;top:855.85px;font-size:16.2px;line-height:24.3px;color:#2F4F8C;font-weight:500;letter-spacing:0.2px;-webkit-text-stroke:0.35px #2F4F8C;">4.2 MCP治理</div>
<div class="t" style="left:1641.2px;top:856.55px;font-size:15px;line-height:22.5px;color:#7A7D84;font-weight:400;">2025/11/1</div>
<svg class="ic" viewBox="0 0 24 24" style="left:1796.2px;top:854.2px;width:24.4px;height:24.4px;fill:#2B5CAC;"><path d="M12 4.5C7 4.500 2.730 7.610 1 12c1.730 4.390 6 7.500 11 7.500s9.270-3.110 11-7.500c-1.730-4.390-6-7.500-11-7.500M12 17c-2.760 0-5-2.240-5-5s2.240-5 5-5 5 2.240 5 5-2.240 5-5 5m0-8c-1.660 0-3 1.340-3 3s1.340 3 3 3 3-1.340 3-3-1.340-3-3-3"/></svg>
<svg class="ic" viewBox="0 0 24 24" style="left:1838.6px;top:854.0000000000001px;width:24.8px;height:24.8px;fill:#8B5CF6;"><path d="M19 3H5c-1.1 0-2 .9-2 2v14c0 1.1.9 2 2 2h14c1.1 0 2-.9 2-2V5c0-1.1-.9-2-2-2M9 17H7v-7h2zm4 0h-2V7h2zm4 0h-2v-4h2z"/></svg>
<svg class="ic" viewBox="0 0 24 24" style="left:1880.8999999999999px;top:854.1px;width:24.8px;height:24.8px;fill:#EF4444;"><path d="M6 19c0 1.1.9 2 2 2h8c1.1 0 2-.9 2-2V7H6zM19 4h-3.500l-1-1h-5l-1 1H5v2h14z"/></svg>
<svg class="ic" viewBox="0 0 24 24" style="left:99.3px;top:930.05px;width:29.4px;height:29.4px;fill:#2B5CAC;"><path d="M19 3H5c-1.110 0-2 .9-2 2v14c0 1.100.890 2 2 2h14c1.110 0 2-.9 2-2V5c0-1.100-.890-2-2-2m-9 14-5-5 1.410-1.410L10 14.170l7.590-7.590L19 8z"/></svg>
<div class="t" style="left:160.7px;top:929.0px;font-size:17.43px;line-height:26.1px;color:#2A2D33;font-weight:500;"><span style="letter-spacing:0.42px">MCPScan</span>的工作流程包括哪三个阶段?</div>
<div class="chip" style="left:1063.2px;top:930.15px;width:98px;background:#E4F4E5;"></div>
<svg class="ic" viewBox="0 0 24 24" style="left:1068.6px;top:936.85px;width:16.6px;height:16.6px;fill:#2E7D32;"><path d="M12 17.270 18.180 21l-1.640-7.030L22 9.240l-7.190-.61L12 2 9.190 8.630 2 9.240l5.460 4.730L5.820 21z"/></svg>
<div class="t" style="left:1090.6px;top:934.4px;font-size:16.2px;line-height:24.3px;color:#2E7D32;font-weight:500;letter-spacing:0.25px;">5.0 优秀</div>
<div class="chip" style="left:1212.8px;top:930.15px;width:228.8px;background:#E2EEF9;"></div>
<div class="t" style="left:1223px;top:934.1px;font-size:16.2px;line-height:24.3px;color:#2468A4;font-weight:400;letter-spacing:0.66px;-webkit-text-stroke:0.3px #2468A4;">ep-20250412181533-kfc6g</div>
<div class="chip" style="left:1481.9px;top:930.15px;width:119px;background:#E4EAF5;"></div>
<div class="t" style="left:1492.4px;top:934.4px;font-size:16.2px;line-height:24.3px;color:#2F4F8C;font-weight:500;letter-spacing:0.2px;-webkit-text-stroke:0.35px #2F4F8C;">4.2 MCP治理</div>
<div class="t" style="left:1641.2px;top:935.1px;font-size:15px;line-height:22.5px;color:#7A7D84;font-weight:400;">2025/11/1</div>
<svg class="ic" viewBox="0 0 24 24" style="left:1796.2px;top:932.75px;width:24.4px;height:24.4px;fill:#2B5CAC;"><path d="M12 4.5C7 4.500 2.730 7.610 1 12c1.730 4.390 6 7.500 11 7.500s9.270-3.110 11-7.500c-1.730-4.390-6-7.500-11-7.500M12 17c-2.760 0-5-2.240-5-5s2.240-5 5-5 5 2.240 5 5-2.240 5-5 5m0-8c-1.660 0-3 1.340-3 3s1.340 3 3 3 3-1.340 3-3-1.340-3-3-3"/></svg>
<svg class="ic" viewBox="0 0 24 24" style="left:1838.6px;top:932.5500000000001px;width:24.8px;height:24.8px;fill:#8B5CF6;"><path d="M19 3H5c-1.1 0-2 .9-2 2v14c0 1.1.9 2 2 2h14c1.1 0 2-.9 2-2V5c0-1.1-.9-2-2-2M9 17H7v-7h2zm4 0h-2V7h2zm4 0h-2v-4h2z"/></svg>
<svg class="ic" viewBox="0 0 24 24" style="left:1880.8999999999999px;top:932.65px;width:24.8px;height:24.8px;fill:#EF4444;"><path d="M6 19c0 1.1.9 2 2 2h8c1.1 0 2-.9 2-2V7H6zM19 4h-3.500l-1-1h-5l-1 1H5v2h14z"/></svg>
<svg class="ic" viewBox="0 0 24 24" style="left:99.3px;top:1008.5999999999999px;width:29.4px;height:29.4px;fill:#2B5CAC;"><path d="M19 3H5c-1.110 0-2 .9-2 2v14c0 1.100.890 2 2 2h14c1.110 0 2-.9 2-2V5c0-1.100-.890-2-2-2m-9 14-5-5 1.410-1.410L10 14.170l7.590-7.590L19 8z"/></svg>
<div class="t" style="left:160.7px;top:1007.55px;font-size:17.43px;line-height:26.1px;color:#2A2D33;font-weight:500;">中国信通院联合多少家单位发布了业界首个智能体安全标准?</div>
<div class="chip" style="left:1063.2px;top:1008.6999999999999px;width:98px;background:#E4F4E5;"></div>
<svg class="ic" viewBox="0 0 24 24" style="left:1068.6px;top:1015.4px;width:16.6px;height:16.6px;fill:#2E7D32;"><path d="M12 17.270 18.180 21l-1.640-7.030L22 9.240l-7.190-.61L12 2 9.190 8.630 2 9.240l5.460 4.730L5.820 21z"/></svg>
<div class="t" style="left:1090.6px;top:1012.95px;font-size:16.2px;line-height:24.3px;color:#2E7D32;font-weight:500;letter-spacing:0.25px;">5.0 优秀</div>
<div class="chip" style="left:1212.8px;top:1008.6999999999999px;width:228.8px;background:#E2EEF9;"></div>
<div class="t" style="left:1223px;top:1012.65px;font-size:16.2px;line-height:24.3px;color:#2468A4;font-weight:400;letter-spacing:0.66px;-webkit-text-stroke:0.3px #2468A4;">ep-20250412181533-kfc6g</div>
<div class="chip" style="left:1481.9px;top:1008.6999999999999px;width:51.8px;background:#E4EAF5;"></div>
<div class="t" style="left:1492.4px;top:1012.95px;font-size:16.2px;line-height:24.3px;color:#2F4F8C;font-weight:500;letter-spacing:0.2px;-webkit-text-stroke:0.35px #2F4F8C;">其他</div>
<div class="t" style="left:1641.2px;top:1013.65px;font-size:15px;line-height:22.5px;color:#7A7D84;font-weight:400;">2025/11/1</div>
<svg class="ic" viewBox="0 0 24 24" style="left:1796.2px;top:1011.3px;width:24.4px;height:24.4px;fill:#2B5CAC;"><path d="M12 4.5C7 4.500 2.730 7.610 1 12c1.730 4.390 6 7.500 11 7.500s9.270-3.110 11-7.500c-1.730-4.390-6-7.500-11-7.500M12 17c-2.760 0-5-2.240-5-5s2.240-5 5-5 5 2.240 5 5-2.240 5-5 5m0-8c-1.660 0-3 1.340-3 3s1.340 3 3 3 3-1.340 3-3-1.340-3-3-3"/></svg>
<svg class="ic" viewBox="0 0 24 24" style="left:1838.6px;top:1011.1px;width:24.8px;height:24.8px;fill:#8B5CF6;"><path d="M19 3H5c-1.1 0-2 .9-2 2v14c0 1.1.9 2 2 2h14c1.1 0 2-.9 2-2V5c0-1.1-.9-2-2-2M9 17H7v-7h2zm4 0h-2V7h2zm4 0h-2v-4h2z"/></svg>
<svg class="ic" viewBox="0 0 24 24" style="left:1880.8999999999999px;top:1011.1999999999999px;width:24.8px;height:24.8px;fill:#EF4444;"><path d="M6 19c0 1.1.9 2 2 2h8c1.1 0 2-.9 2-2V7H6zM19 4h-3.500l-1-1h-5l-1 1H5v2h14z"/></svg>
<svg class="ic" viewBox="0 0 24 24" style="left:99.3px;top:1087.1499999999999px;width:29.4px;height:29.4px;fill:#2B5CAC;"><path d="M19 3H5c-1.110 0-2 .9-2 2v14c0 1.100.890 2 2 2h14c1.110 0 2-.9 2-2V5c0-1.100-.890-2-2-2m-9 14-5-5 1.410-1.410L10 14.170l7.590-7.590L19 8z"/></svg>
<div class="t" style="left:160.7px;top:1086.1px;font-size:17.43px;line-height:26.1px;color:#2A2D33;font-weight:500;">端侧智能体具有什么能力</div>
<div class="chip" style="left:1063.2px;top:1087.25px;width:98px;background:#E4F4E5;"></div>
<svg class="ic" viewBox="0 0 24 24" style="left:1068.6px;top:1093.9499999999998px;width:16.6px;height:16.6px;fill:#2E7D32;"><path d="M12 17.270 18.180 21l-1.640-7.030L22 9.240l-7.190-.61L12 2 9.190 8.630 2 9.240l5.460 4.730L5.820 21z"/></svg>
<div class="t" style="left:1090.6px;top:1091.5px;font-size:16.2px;line-height:24.3px;color:#2E7D32;font-weight:500;letter-spacing:0.25px;">5.0 优秀</div>
<div class="chip" style="left:1212.8px;top:1087.25px;width:228.8px;background:#E2EEF9;"></div>
<div class="t" style="left:1223px;top:1091.2px;font-size:16.2px;line-height:24.3px;color:#2468A4;font-weight:400;letter-spacing:0.66px;-webkit-text-stroke:0.3px #2468A4;">ep-20250412181533-kfc6g</div>
<div class="chip" style="left:1481.9px;top:1087.25px;width:51.8px;background:#E4EAF5;"></div>
<div class="t" style="left:1492.4px;top:1091.5px;font-size:16.2px;line-height:24.3px;color:#2F4F8C;font-weight:500;letter-spacing:0.2px;-webkit-text-stroke:0.35px #2F4F8C;">其他</div>
<div class="t" style="left:1641.2px;top:1092.2px;font-size:15px;line-height:22.5px;color:#7A7D84;font-weight:400;">2025/11/1</div>
<svg class="ic" viewBox="0 0 24 24" style="left:1796.2px;top:1089.85px;width:24.4px;height:24.4px;fill:#2B5CAC;"><path d="M12 4.5C7 4.500 2.730 7.610 1 12c1.730 4.390 6 7.500 11 7.500s9.270-3.110 11-7.500c-1.730-4.390-6-7.500-11-7.500M12 17c-2.760 0-5-2.240-5-5s2.240-5 5-5 5 2.240 5 5-2.240 5-5 5m0-8c-1.660 0-3 1.340-3 3s1.340 3 3 3 3-1.340 3-3-1.340-3-3-3"/></svg>
<svg class="ic" viewBox="0 0 24 24" style="left:1838.6px;top:1089.6499999999999px;width:24.8px;height:24.8px;fill:#8B5CF6;"><path d="M19 3H5c-1.1 0-2 .9-2 2v14c0 1.1.9 2 2 2h14c1.1 0 2-.9 2-2V5c0-1.1-.9-2-2-2M9 17H7v-7h2zm4 0h-2V7h2zm4 0h-2v-4h2z"/></svg>
<svg class="ic" viewBox="0 0 24 24" style="left:1880.8999999999999px;top:1089.7499999999998px;width:24.8px;height:24.8px;fill:#EF4444;"><path d="M6 19c0 1.1.9 2 2 2h8c1.1 0 2-.9 2-2V7H6zM19 4h-3.500l-1-1h-5l-1 1H5v2h14z"/></svg>
<svg class="ic" viewBox="0 0 24 24" style="left:99.3px;top:1165.6999999999998px;width:29.4px;height:29.4px;fill:#2B5CAC;"><path d="M19 3H5c-1.110 0-2 .9-2 2v14c0 1.100.890 2 2 2h14c1.110 0 2-.9 2-2V5c0-1.100-.890-2-2-2m-9 14-5-5 1.410-1.410L10 14.170l7.590-7.590L19 8z"/></svg>
<div class="t" style="left:160.7px;top:1164.65px;font-size:17.43px;line-height:26.1px;color:#2A2D33;font-weight:500;">元数据分析的结果分为哪几类?</div>
<div class="chip" style="left:1063.2px;top:1165.8px;width:98px;background:#E4F4E5;"></div>
<svg class="ic" viewBox="0 0 24 24" style="left:1068.6px;top:1172.4999999999998px;width:16.6px;height:16.6px;fill:#2E7D32;"><path d="M12 17.270 18.180 21l-1.640-7.030L22 9.240l-7.190-.61L12 2 9.190 8.630 2 9.240l5.460 4.730L5.820 21z"/></svg>
<div class="t" style="left:1090.6px;top:1170.05px;font-size:16.2px;line-height:24.3px;color:#2E7D32;font-weight:500;letter-spacing:0.25px;">5.0 优秀</div>
<div class="chip" style="left:1212.8px;top:1165.8px;width:228.8px;background:#E2EEF9;"></div>
<div class="t" style="left:1223px;top:1169.75px;font-size:16.2px;line-height:24.3px;color:#2468A4;font-weight:400;letter-spacing:0.66px;-webkit-text-stroke:0.3px #2468A4;">ep-20250412181533-kfc6g</div>
<div class="chip" style="left:1481.9px;top:1165.8px;width:51.8px;background:#E4EAF5;"></div>
<div class="t" style="left:1492.4px;top:1170.05px;font-size:16.2px;line-height:24.3px;color:#2F4F8C;font-weight:500;letter-spacing:0.2px;-webkit-text-stroke:0.35px #2F4F8C;">其他</div>
<div class="t" style="left:1641.2px;top:1170.75px;font-size:15px;line-height:22.5px;color:#7A7D84;font-weight:400;">2025/11/1</div>
<svg class="ic" viewBox="0 0 24 24" style="left:1796.2px;top:1168.3999999999999px;width:24.4px;height:24.4px;fill:#2B5CAC;"><path d="M12 4.5C7 4.500 2.730 7.610 1 12c1.730 4.390 6 7.500 11 7.500s9.270-3.110 11-7.500c-1.730-4.390-6-7.500-11-7.500M12 17c-2.760 0-5-2.240-5-5s2.240-5 5-5 5 2.240 5 5-2.240 5-5 5m0-8c-1.660 0-3 1.340-3 3s1.340 3 3 3 3-1.340 3-3-1.340-3-3-3"/></svg>
<svg class="ic" viewBox="0 0 24 24" style="left:1838.6px;top:1168.1999999999998px;width:24.8px;height:24.8px;fill:#8B5CF6;"><path d="M19 3H5c-1.1 0-2 .9-2 2v14c0 1.1.9 2 2 2h14c1.1 0 2-.9 2-2V5c0-1.1-.9-2-2-2M9 17H7v-7h2zm4 0h-2V7h2zm4 0h-2v-4h2z"/></svg>
<svg class="ic" viewBox="0 0 24 24" style="left:1880.8999999999999px;top:1168.2999999999997px;width:24.8px;height:24.8px;fill:#EF4444;"><path d="M6 19c0 1.1.9 2 2 2h8c1.1 0 2-.9 2-2V7H6zM19 4h-3.500l-1-1h-5l-1 1H5v2h14z"/></svg>
<svg class="ic" viewBox="960 440 500 520" style="left:1856.55px;top:205.09px;width:39.87px;height:41.47px;filter:drop-shadow(0 1.6px 1.4px rgba(0,0,0,0.4));">
<path d="M1105 490 Q1140 465 1165 500 L1205 615 Q1240 580 1275 605 Q1320 570 1360 610 Q1420 610 1435 670 L1440 790 Q1425 850 1385 890 L1375 930 L1165 930 L1155 895 L1010 720 Q995 690 1025 672 Q1045 660 1070 675 L1135 725 L1088 530 Q1080 500 1105 490 Z" fill="#FFFFFF" stroke="#000000" stroke-width="25" stroke-linejoin="round"/>
<path d="M1222 735 V850 M1282 735 V850 M1342 735 V850" stroke="#000" stroke-width="22" fill="none"/>
<path d="M1208 612 V665 M1292 600 V648 M1376 622 V668" stroke="#000" stroke-width="20" fill="none" stroke-linecap="round"/>
</svg>
</body>
</html>
